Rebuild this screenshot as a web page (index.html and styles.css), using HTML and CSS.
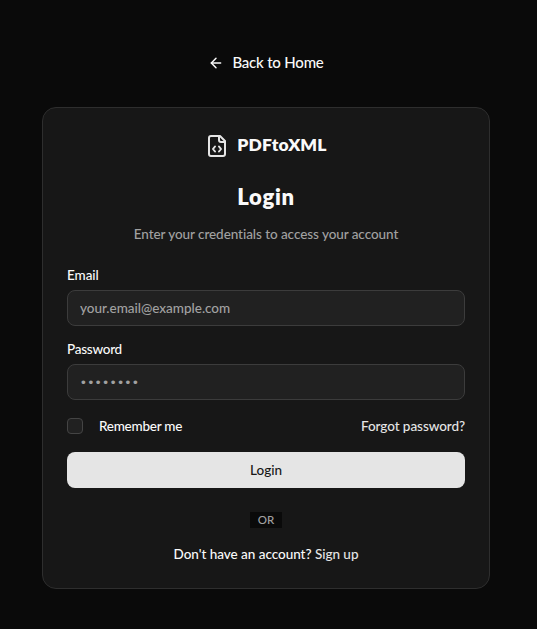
FILE: index.html
```html
<!DOCTYPE html>
<html lang="en">
<head>
<meta charset="utf-8">
<title>Login - PDFtoXML</title>
<link rel="stylesheet" href="styles.css">
</head>
<body>
<main class="page">
  <a class="back" href="#">
    <svg class="back-icon" viewBox="0 0 24 24"><path d="m12 19-7-7 7-7"/><path d="M19 12H5"/></svg>
    <span>Back to Home</span>
  </a>
  <section class="card">
    <div class="brand">
      <svg class="brand-icon" viewBox="0 0 24 24"><path d="M15 2H6a2 2 0 0 0-2 2v16a2 2 0 0 0 2 2h12a2 2 0 0 0 2-2V7Z"/><path d="M14 2v4a2 2 0 0 0 2 2h4"/><path d="M10 12.500 8 15l2 2.500"/><path d="m14 12.500 2 2.500-2 2.500"/></svg>
      <span class="brand-name">PDFtoXML</span>
    </div>
    <h1 class="title">Login</h1>
    <p class="subtitle">Enter your credentials to access your account</p>
    <form class="form">
      <label class="label label-email" for="email">Email</label>
      <input class="input" id="email" type="email" placeholder="your.email@example.com">
      <label class="label label-password" for="password">Password</label>
      <input class="input input-password" id="password" type="password" placeholder="••••••••">
      <div class="options">
        <label class="remember"><input class="checkbox" type="checkbox"><span class="remember-text">Remember me</span></label>
        <a class="forgot" href="#">Forgot password?</a>
      </div>
      <button class="submit" type="button">Login</button>
    </form>
    <div class="divider"><span class="or">OR</span></div>
    <p class="signup"><span>Don't have an account?</span> <a class="signup-link" href="#">Sign up</a></p>
  </section>
</main>
</body>
</html>
```
FILE: styles.css
```css
* { box-sizing: border-box; }
body {
  margin: 0;
  background: #0a0a0a;
  color: #fafafa;
  font: 500 13.500px/20px Lato, "Liberation Sans", sans-serif;
  font-variant-ligatures: none;
  letter-spacing: -0.06px;
}
a { color: inherit; text-decoration: none; }
svg { fill: none; stroke: #e5e5e5; stroke-width: 2; stroke-linecap: round; stroke-linejoin: round; }
.page { width: 448px; margin-left: 42px; padding-top: 50px; }
.back { display: flex; justify-content: center; align-items: center; gap: 8px; height: 24px; font-size: 15px; letter-spacing: -0.2px; }
.back-icon { width: 16px; height: 16px; position: relative; top: 1px; stroke: #fafafa; stroke-width: 2.200; }
.card {
  height: 482px;
  margin-top: 33px;
  padding: 24px;
  background: #171717;
  border: 1px solid #2e2e2e;
  border-radius: 14px;
}
.brand { display: flex; justify-content: center; align-items: center; gap: 8px; height: 28px; font-size: 17.500px; font-weight: 800; letter-spacing: 0.15px; }
.brand-icon { width: 24px; height: 24px; }
.brand-name { position: relative; top: -1px; }
.title { margin: 20px 0 0; font-size: 22px; line-height: 33px; font-weight: 800; letter-spacing: 0.7px; text-align: center; }
.subtitle { margin: 11px 0 0; color: #a1a1a1; text-align: center; white-space: nowrap; }
.form { display: flex; flex-direction: column; margin-top: 24px; }
.label { height: 14px; line-height: 14px; margin-bottom: 8px; }
.label-password { margin-top: 16px; letter-spacing: -0.25px; }
.input {
  width: 100%;
  height: 36px;
  padding: 0 12px 1px;
  border: 1px solid #3c3c3c;
  border-radius: 8px;
  background: #212121;
  color: #fafafa;
  font: inherit;
  letter-spacing: -0.02px;
}
.input::placeholder { color: #a1a1a1; opacity: 1; }
.input-password { padding-left: 13px; }
.input-password::placeholder { font-family: "Liberation Sans", sans-serif; letter-spacing: 2.700px; }
.options { display: flex; justify-content: space-between; align-items: center; height: 20px; margin-top: 16px; }
.remember { display: flex; align-items: center; gap: 16px; }
.remember-text { letter-spacing: -0.25px; }
.checkbox { appearance: none; width: 16px; height: 16px; margin: 0; border: 1px solid #444; border-radius: 4px; background: #212121; }
.forgot, .signup-link { color: #e5e5e5; }
.submit { height: 36px; margin-top: 16px; border: 0; border-radius: 8px; background: #e5e5e5; color: #171717; font: inherit; }
.divider { display: flex; justify-content: center; margin-top: 24px; }
.or { height: 16px; padding: 0 8px; background: #0a0a0a; color: #a1a1a1; font-size: 11.500px; line-height: 15px; letter-spacing: -0.1px; }
.signup { margin: 16px 0 0; text-align: center; letter-spacing: -0.03px; }
```
